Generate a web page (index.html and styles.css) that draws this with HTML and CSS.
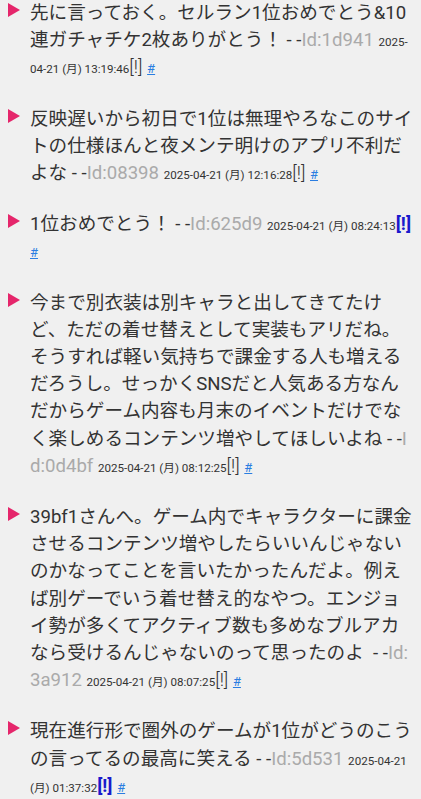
FILE: index.html
```html
<!DOCTYPE html>
<html lang="ja">
<head>
    <meta charset="UTF-8">
    <meta name="viewport" content="width=device-width, initial-scale=1.0">
    <title>スレッド</title>
    <link rel="stylesheet" href="styles.css">
</head>
<body>

<ul class="thread">
    <li class="res">
        <span class="mark"><svg width="12" height="14" viewBox="0 0 12 14"><polygon points="0,0 12,7 0,14"/></svg></span>
        <div class="body">先に言っておく。セルラン1位おめでとう&amp;10連ガチャチケ2枚ありがとう！ - -<span class="uid">Id:1d941</span> <span class="date">2025-<wbr>04-21 (月) 13:19:46</span><a class="report">[!]</a> <a class="anchor" href="#">#</a></div>
    </li>
    <li class="res">
        <span class="mark"><svg width="12" height="14" viewBox="0 0 12 14"><polygon points="0,0 12,7 0,14"/></svg></span>
        <div class="body">反映遅いから初日で1位は無理やろなこのサイトの仕様ほんと夜メンテ明けのアプリ不利だよな - -<span class="uid">Id:08398</span> <span class="date">2025-<wbr>04-21 (月) 12:16:28</span><a class="report">[!]</a> <a class="anchor" href="#">#</a></div>
    </li>
    <li class="res">
        <span class="mark"><svg width="12" height="14" viewBox="0 0 12 14"><polygon points="0,0 12,7 0,14"/></svg></span>
        <div class="body">1位おめでとう！ - -<span class="uid">Id:625d9</span> <span class="date">2025-<wbr>04-21 (月) 08:24:13</span><a class="report hot">[!]</a> <a class="anchor" href="#">#</a></div>
    </li>
    <li class="res">
        <span class="mark"><svg width="12" height="14" viewBox="0 0 12 14"><polygon points="0,0 12,7 0,14"/></svg></span>
        <div class="body">今まで別衣装は別キャラと出してきてたけど、ただの着せ替えとして実装もアリだね。そうすれば軽い気持ちで課金する人も増えるだろうし。せっかくSNSだと人気ある方なんだからゲーム内容も月末のイベントだけでなく楽しめるコンテンツ増やしてほしいよね - -<span class="uid">Id:0d4bf</span> <span class="date">2025-<wbr>04-21 (月) 08:12:25</span><a class="report">[!]</a> <a class="anchor" href="#">#</a></div>
    </li>
    <li class="res">
        <span class="mark"><svg width="12" height="14" viewBox="0 0 12 14"><polygon points="0,0 12,7 0,14"/></svg></span>
        <div class="body">39bf1さんへ。ゲーム内でキャラクターに課金させるコンテンツ増やしたらいいんじゃないのかなってことを言いたかったんだよ。例えば別ゲーでいう着せ替え的なやつ。エンジョイ勢が多くてアクティブ数も多めなブルアカなら受けるんじゃないのって思ったのよ&nbsp; - -<span class="uid">Id:3a912</span> <span class="date">2025-<wbr>04-21 (月) 08:07:25</span><a class="report">[!]</a> <a class="anchor" href="#">#</a></div>
    </li>
    <li class="res">
        <span class="mark"><svg width="12" height="14" viewBox="0 0 12 14"><polygon points="0,0 12,7 0,14"/></svg></span>
        <div class="body">現在進行形で圏外のゲームが1位がどうのこうの言ってるの最高に笑える - -<span class="uid">Id:5d531</span> <span class="date">2025-<wbr>04-21 (月) 01:37:32</span><a class="report hot">[!]</a> <a class="anchor" href="#">#</a></div>
    </li>
</ul>

</body>
</html>
```

FILE: styles.css
```css
body {
    font-family: Roboto, "Noto Sans CJK JP", sans-serif;
    background-color: #f0f0f0;
    color: #333;
    margin: 0;
    padding: 0;
}
.thread {
    list-style: none;
    margin: 0;
    padding: 0 7px 0 8px;
}
.res {
    display: flex;
    margin-bottom: 24px;
}
.mark {
    flex: none;
    width: 22px;
    padding-top: 3px;
}
.mark svg {
    display: block;
    fill: #e5266b;
}
.body {
    flex: 1;
    font-size: 18.6px;
    line-height: 27.2px;
    word-break: break-all;
}
.uid {
    color: #aaa;
}
.date,
.report,
.anchor {
    line-height: 1;
}
.date {
    font-size: 11.6px;
    word-break: normal;
}
.report {
    color: #333;
    font-weight: 300;
}
.report.hot {
    color: #1a1acc;
    font-weight: bold;
}
.anchor {
    color: #2a7de1;
    font-size: 13px;
}
```
